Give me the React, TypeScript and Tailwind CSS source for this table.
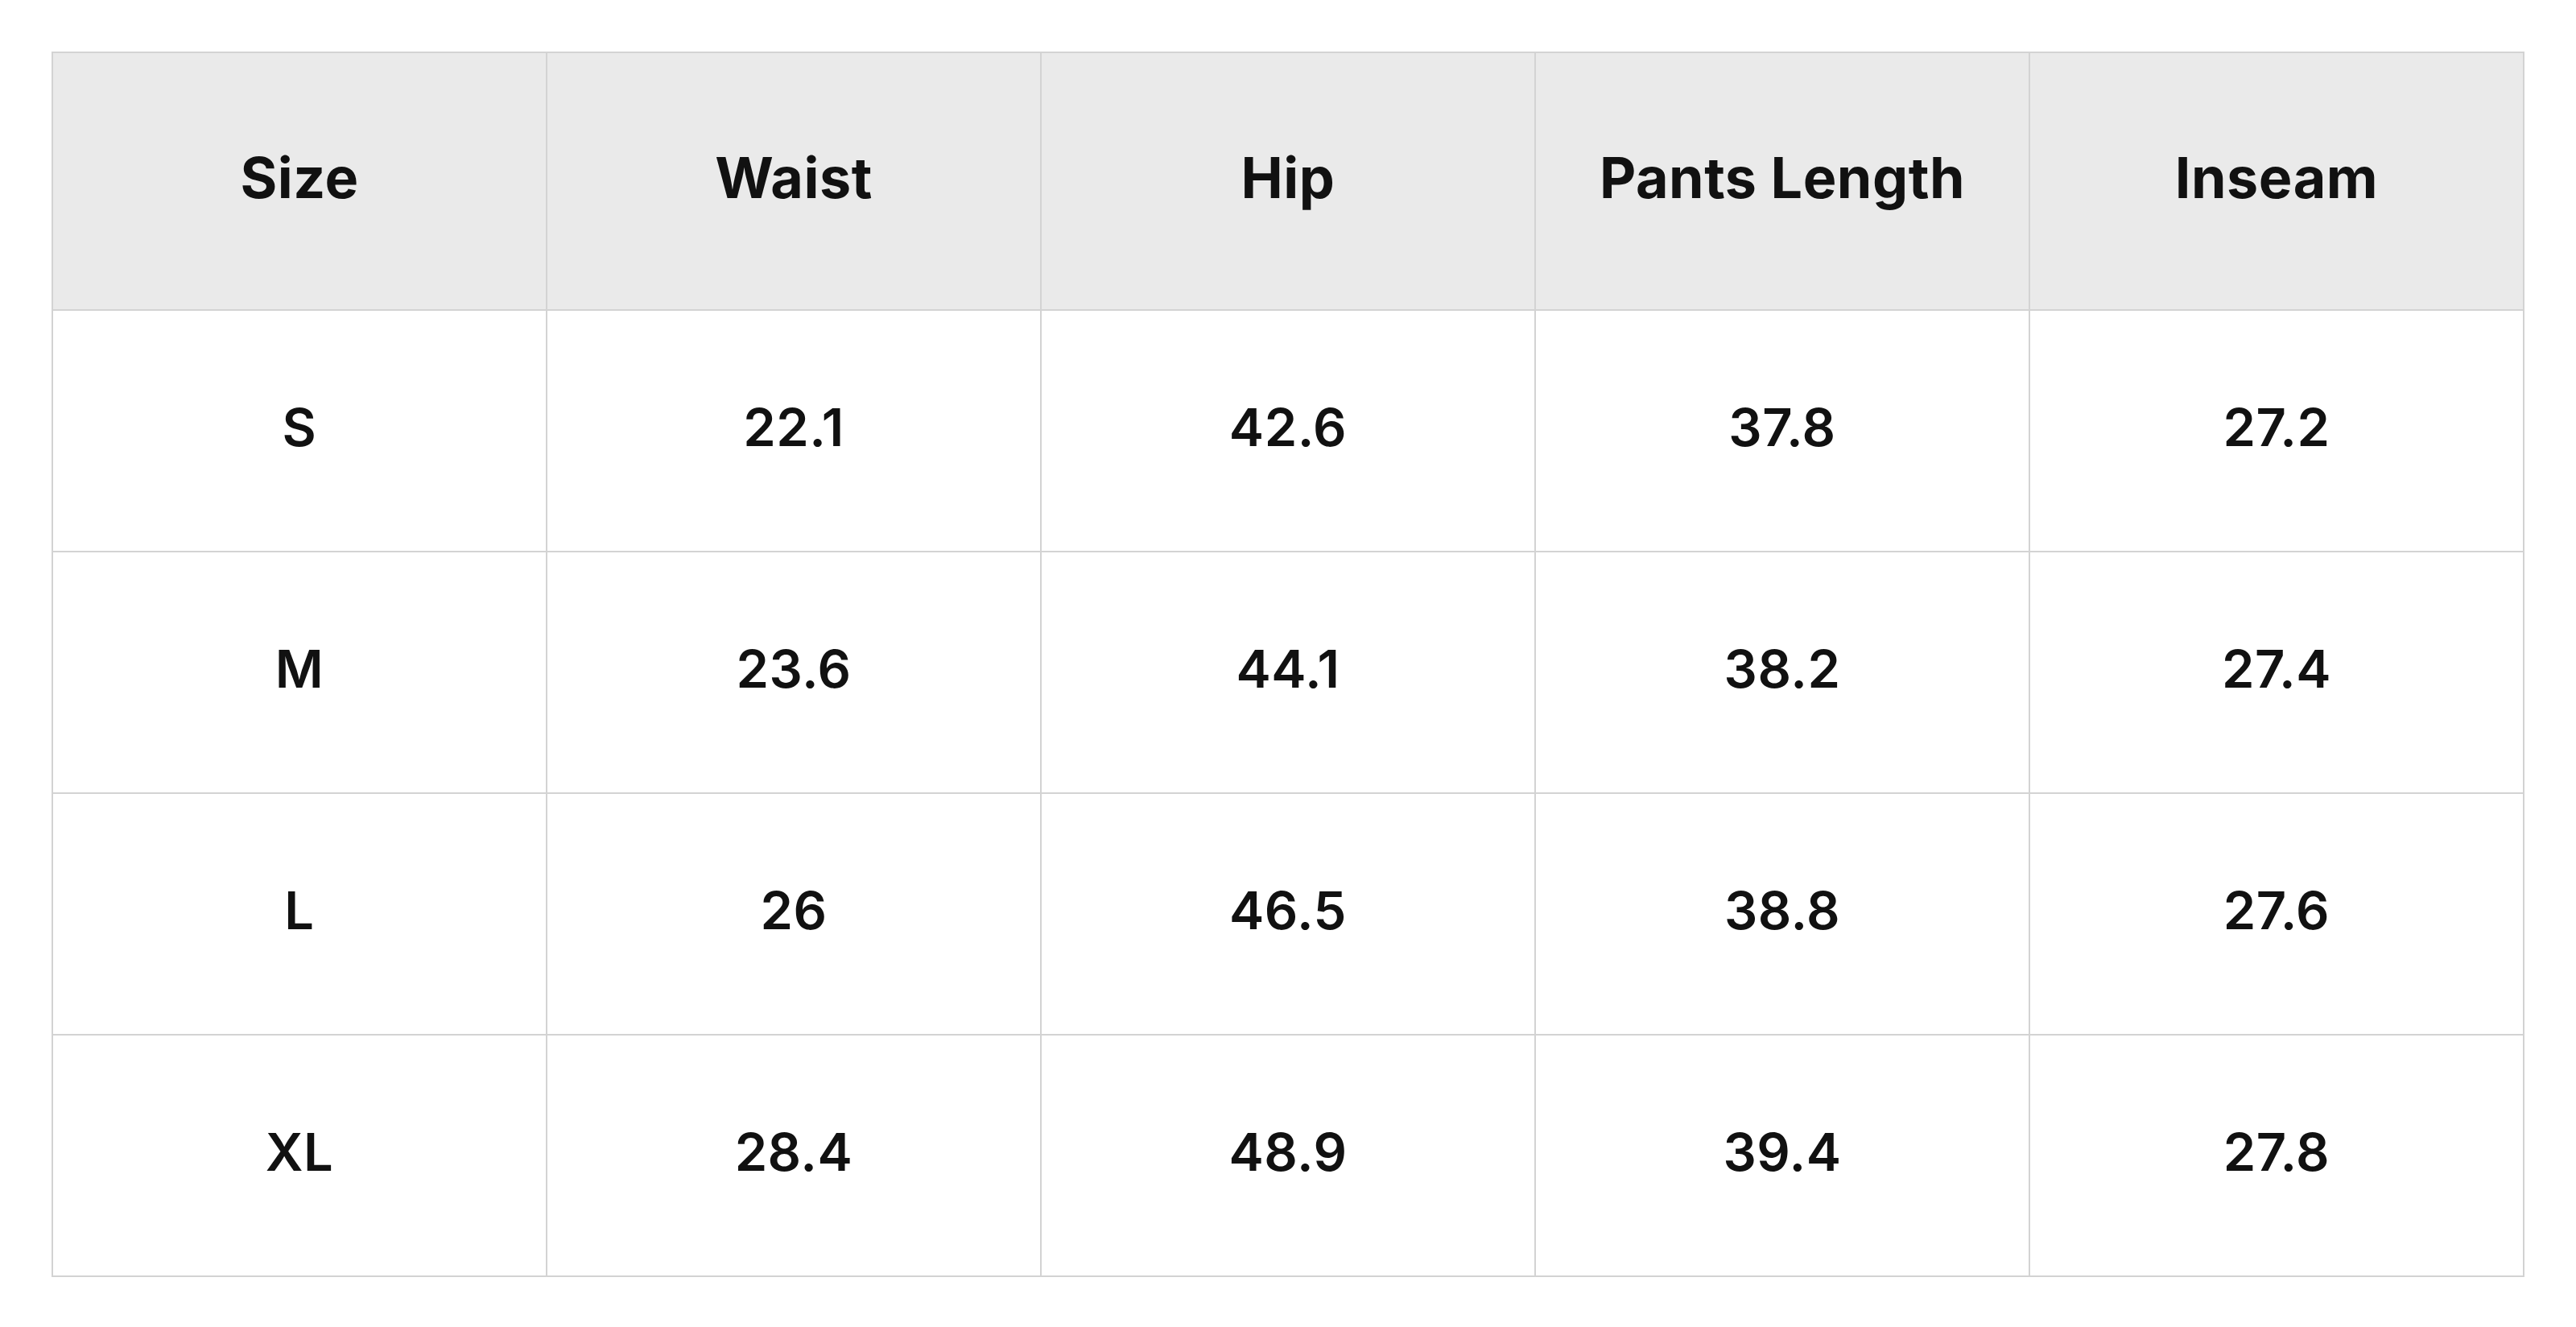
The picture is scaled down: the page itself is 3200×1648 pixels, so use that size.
const headers = ['Size', 'Waist', 'Hip', 'Pants Length', 'Inseam'];

const rows = [
  ['S', '22.1', '42.6', '37.8', '27.2'],
  ['M', '23.6', '44.1', '38.2', '27.4'],
  ['L', '26', '46.5', '38.8', '27.6'],
  ['XL', '28.4', '48.9', '39.4', '27.8'],
];

export default function App() {
  return (
    <div
      className="min-h-screen bg-white px-[64px] pt-[64px] text-[#111111]"
      style={{ fontFamily: 'Inter, "Noto Sans", sans-serif' }}
    >
      <table className="w-full table-fixed border-collapse">
        <thead>
          <tr className="h-[320px] bg-[#eaeaea]">
            {headers.map((h) => (
              <th
                key={h}
                className="border-2 border-[#d3d3d3] pb-[10px] text-center align-middle text-[70px] font-bold tracking-[0.5px]"
              >
                {h}
              </th>
            ))}
          </tr>
        </thead>
        <tbody>
          {rows.map((row) => (
            <tr key={row[0]} className="h-[300px]">
              {row.map((cell, i) => (
                <td
                  key={i}
                  className="border-2 border-[#d3d3d3] pb-[8px] text-center align-middle text-[65px] font-semibold tracking-[0.5px]"
                >
                  {cell}
                </td>
              ))}
            </tr>
          ))}
        </tbody>
      </table>
    </div>
  );
}
